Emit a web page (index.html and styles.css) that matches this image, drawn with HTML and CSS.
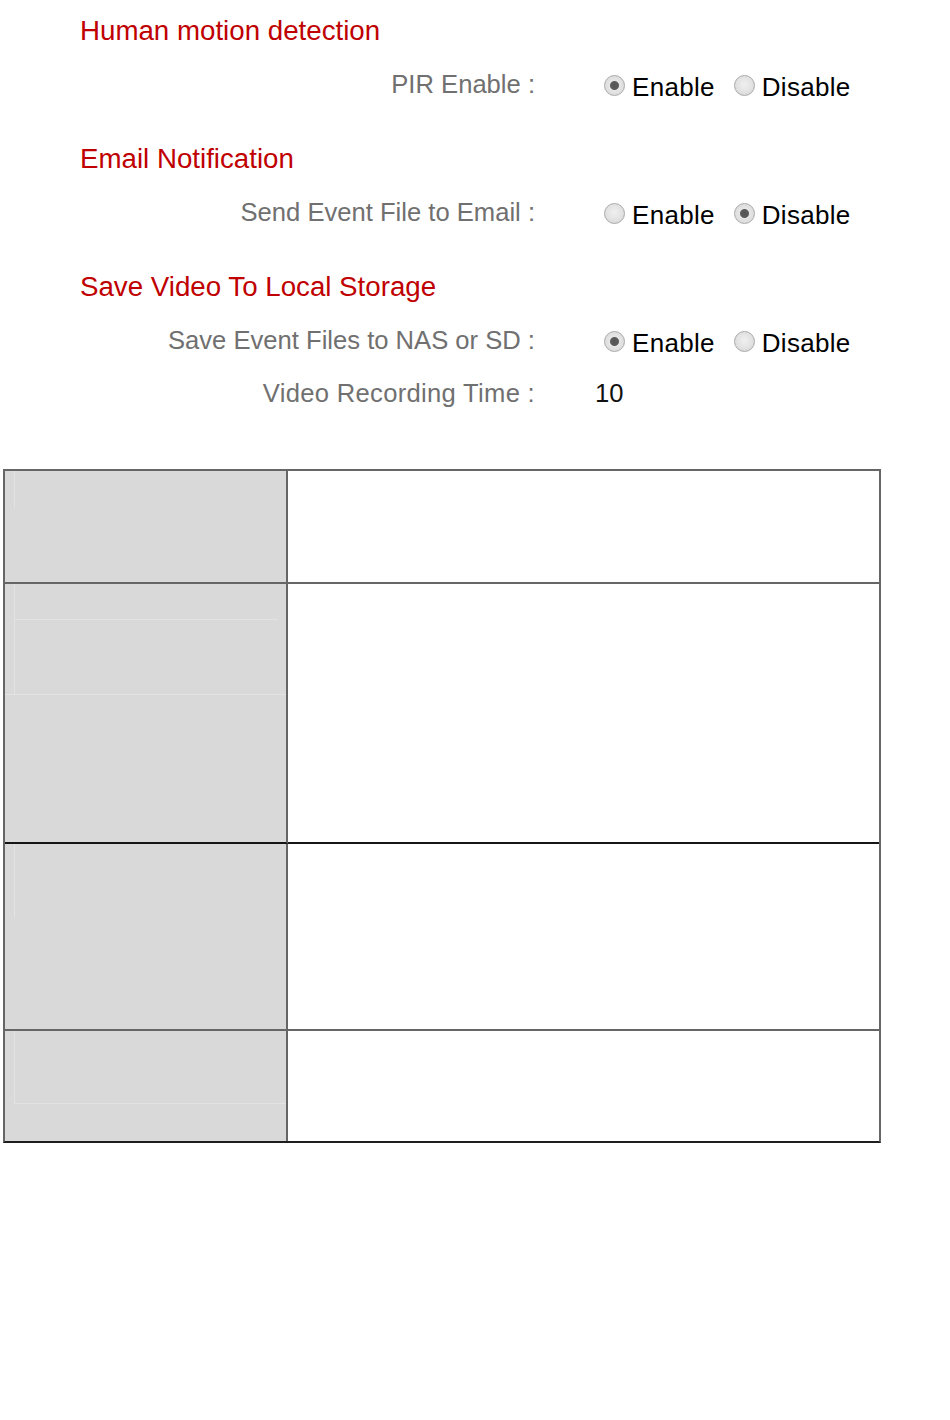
FILE: index.html
```html
<!DOCTYPE html>
<html lang="en">
<head>
<meta charset="utf-8">
<title>Event settings</title>
<link rel="stylesheet" href="styles.css">
</head>
<body>
<div class="settings">
  <section class="group">
    <h2 class="group-title">Human motion detection</h2>
    <div class="row">
      <div class="label">PIR Enable :</div>
      <div class="value value--radios">
        <span class="opt"><span class="radio radio--on"></span><span class="opt-text">Enable</span></span>
        <span class="opt"><span class="radio"></span><span class="opt-text">Disable</span></span>
      </div>
    </div>
  </section>
  <section class="group">
    <h2 class="group-title">Email Notification</h2>
    <div class="row">
      <div class="label">Send Event File to Email :</div>
      <div class="value value--radios">
        <span class="opt"><span class="radio"></span><span class="opt-text">Enable</span></span>
        <span class="opt"><span class="radio radio--on"></span><span class="opt-text">Disable</span></span>
      </div>
    </div>
  </section>
  <section class="group">
    <h2 class="group-title">Save Video To Local Storage</h2>
    <div class="row">
      <div class="label">Save Event Files to NAS or SD :</div>
      <div class="value value--radios">
        <span class="opt"><span class="radio radio--on"></span><span class="opt-text">Enable</span></span>
        <span class="opt"><span class="radio"></span><span class="opt-text">Disable</span></span>
      </div>
    </div>
    <div class="row">
      <div class="label label--wide">Video Recording Time :</div>
      <div class="value value--text">10</div>
    </div>
  </section>
</div>

<div class="grid-table">
  <div class="cell cell--head r1">
    <div class="ghost ghost--a"></div>
  </div>
  <div class="cell cell--body r1"></div>

  <div class="cell cell--head r2">
    <div class="ghost ghost--b"><div class="ghost-rule"></div></div>
    <div class="ghost-base"></div>
  </div>
  <div class="cell cell--body r2"></div>

  <div class="cell cell--head r3">
    <div class="ghost ghost--c"></div>
  </div>
  <div class="cell cell--body r3"></div>

  <div class="cell cell--head r4 last">
    <div class="ghost ghost--d"></div>
  </div>
  <div class="cell cell--body r4 last"></div>
</div>
</body>
</html>
```

FILE: styles.css
```css
html, body {
  margin: 0;
  padding: 0;
  background: #ffffff;
}

body {
  font-family: "Liberation Sans", Arial, sans-serif;
  width: 950px;
  height: 1420px;
}

.settings {
  padding-top: 11px;
}

.group {
  margin-bottom: 28px;
}

.group:last-child {
  margin-bottom: 0;
}

.group-title {
  margin: 0 0 7px 80px;
  font-weight: normal;
  font-size: 27.7px;
  line-height: 40px;
  height: 40px;
  color: #c00000;
  white-space: nowrap;
}

.row {
  display: grid;
  grid-template-columns: 535px 1fr;
  height: 53px;
}

.label {
  text-align: right;
  font-size: 25.6px;
  line-height: 53px;
  color: #707070;
  white-space: nowrap;
}

.label--wide {
  letter-spacing: 0.3px;
}

.value {
  padding-left: 60px;
  white-space: nowrap;
}

.value--text {
  font-size: 25.6px;
  line-height: 53px;
  color: #111111;
}

.value--radios {
  padding-top: 6px;
  height: 47px;
  line-height: 47px;
  font-size: 26px;
  color: #000000;
  display: flex;
  gap: 19px;
}

.opt {
  display: inline-block;
}

.opt:first-child {
  margin-left: 9px;
}

.radio {
  display: inline-block;
  width: 19px;
  height: 19px;
  border: 1px solid #a9a9a9;
  border-radius: 50%;
  background: radial-gradient(circle at 50% 45%, #f0f0f0 0, #e2e2e2 55%, #cfcfcf 100%);
  vertical-align: baseline;
  margin-right: 7px;
  box-sizing: content-box;
}

.radio--on {
  background: radial-gradient(circle at 50% 50%, #555555 0, #5c5c5c 4px, #e6e6e6 5px, #dddddd 70%, #cbcbcb 100%);
}

.opt-text {
  display: inline-block;
  letter-spacing: 0.3px;
}

/* table */
.grid-table {
  margin: 49px 0 0 3px;
  width: 874px;
  border: 2px solid #666666;
  border-bottom-color: #1e1e1e;
  display: grid;
  grid-template-columns: 283px 1fr;
  grid-template-rows: 113px 260px 187px 110px;
}

.cell {
  border-bottom: 2px solid #666666;
  box-sizing: border-box;
}

.cell.last {
  border-bottom: 0;
}

.cell--head {
  background: #d9d9d9;
  border-right: 2px solid #666666;
}

.cell--body {
  background: #ffffff;
}

.r2 {
  border-bottom-color: #151515;
}

.ghost {
  margin-left: 9px;
  border-left: 1px solid #e3e3e3;
}

.ghost--a {
  height: 37px;
}

.ghost--b {
  height: 110px;
}

.ghost-rule {
  width: 263px;
  height: 35px;
  border-bottom: 1px solid #e3e3e3;
}

.ghost-base {
  border-top: 1px solid #e3e3e3;
}

.ghost--c {
  height: 73px;
}

.ghost--d {
  height: 72px;
  border-bottom: 1px solid #e3e3e3;
}
```
